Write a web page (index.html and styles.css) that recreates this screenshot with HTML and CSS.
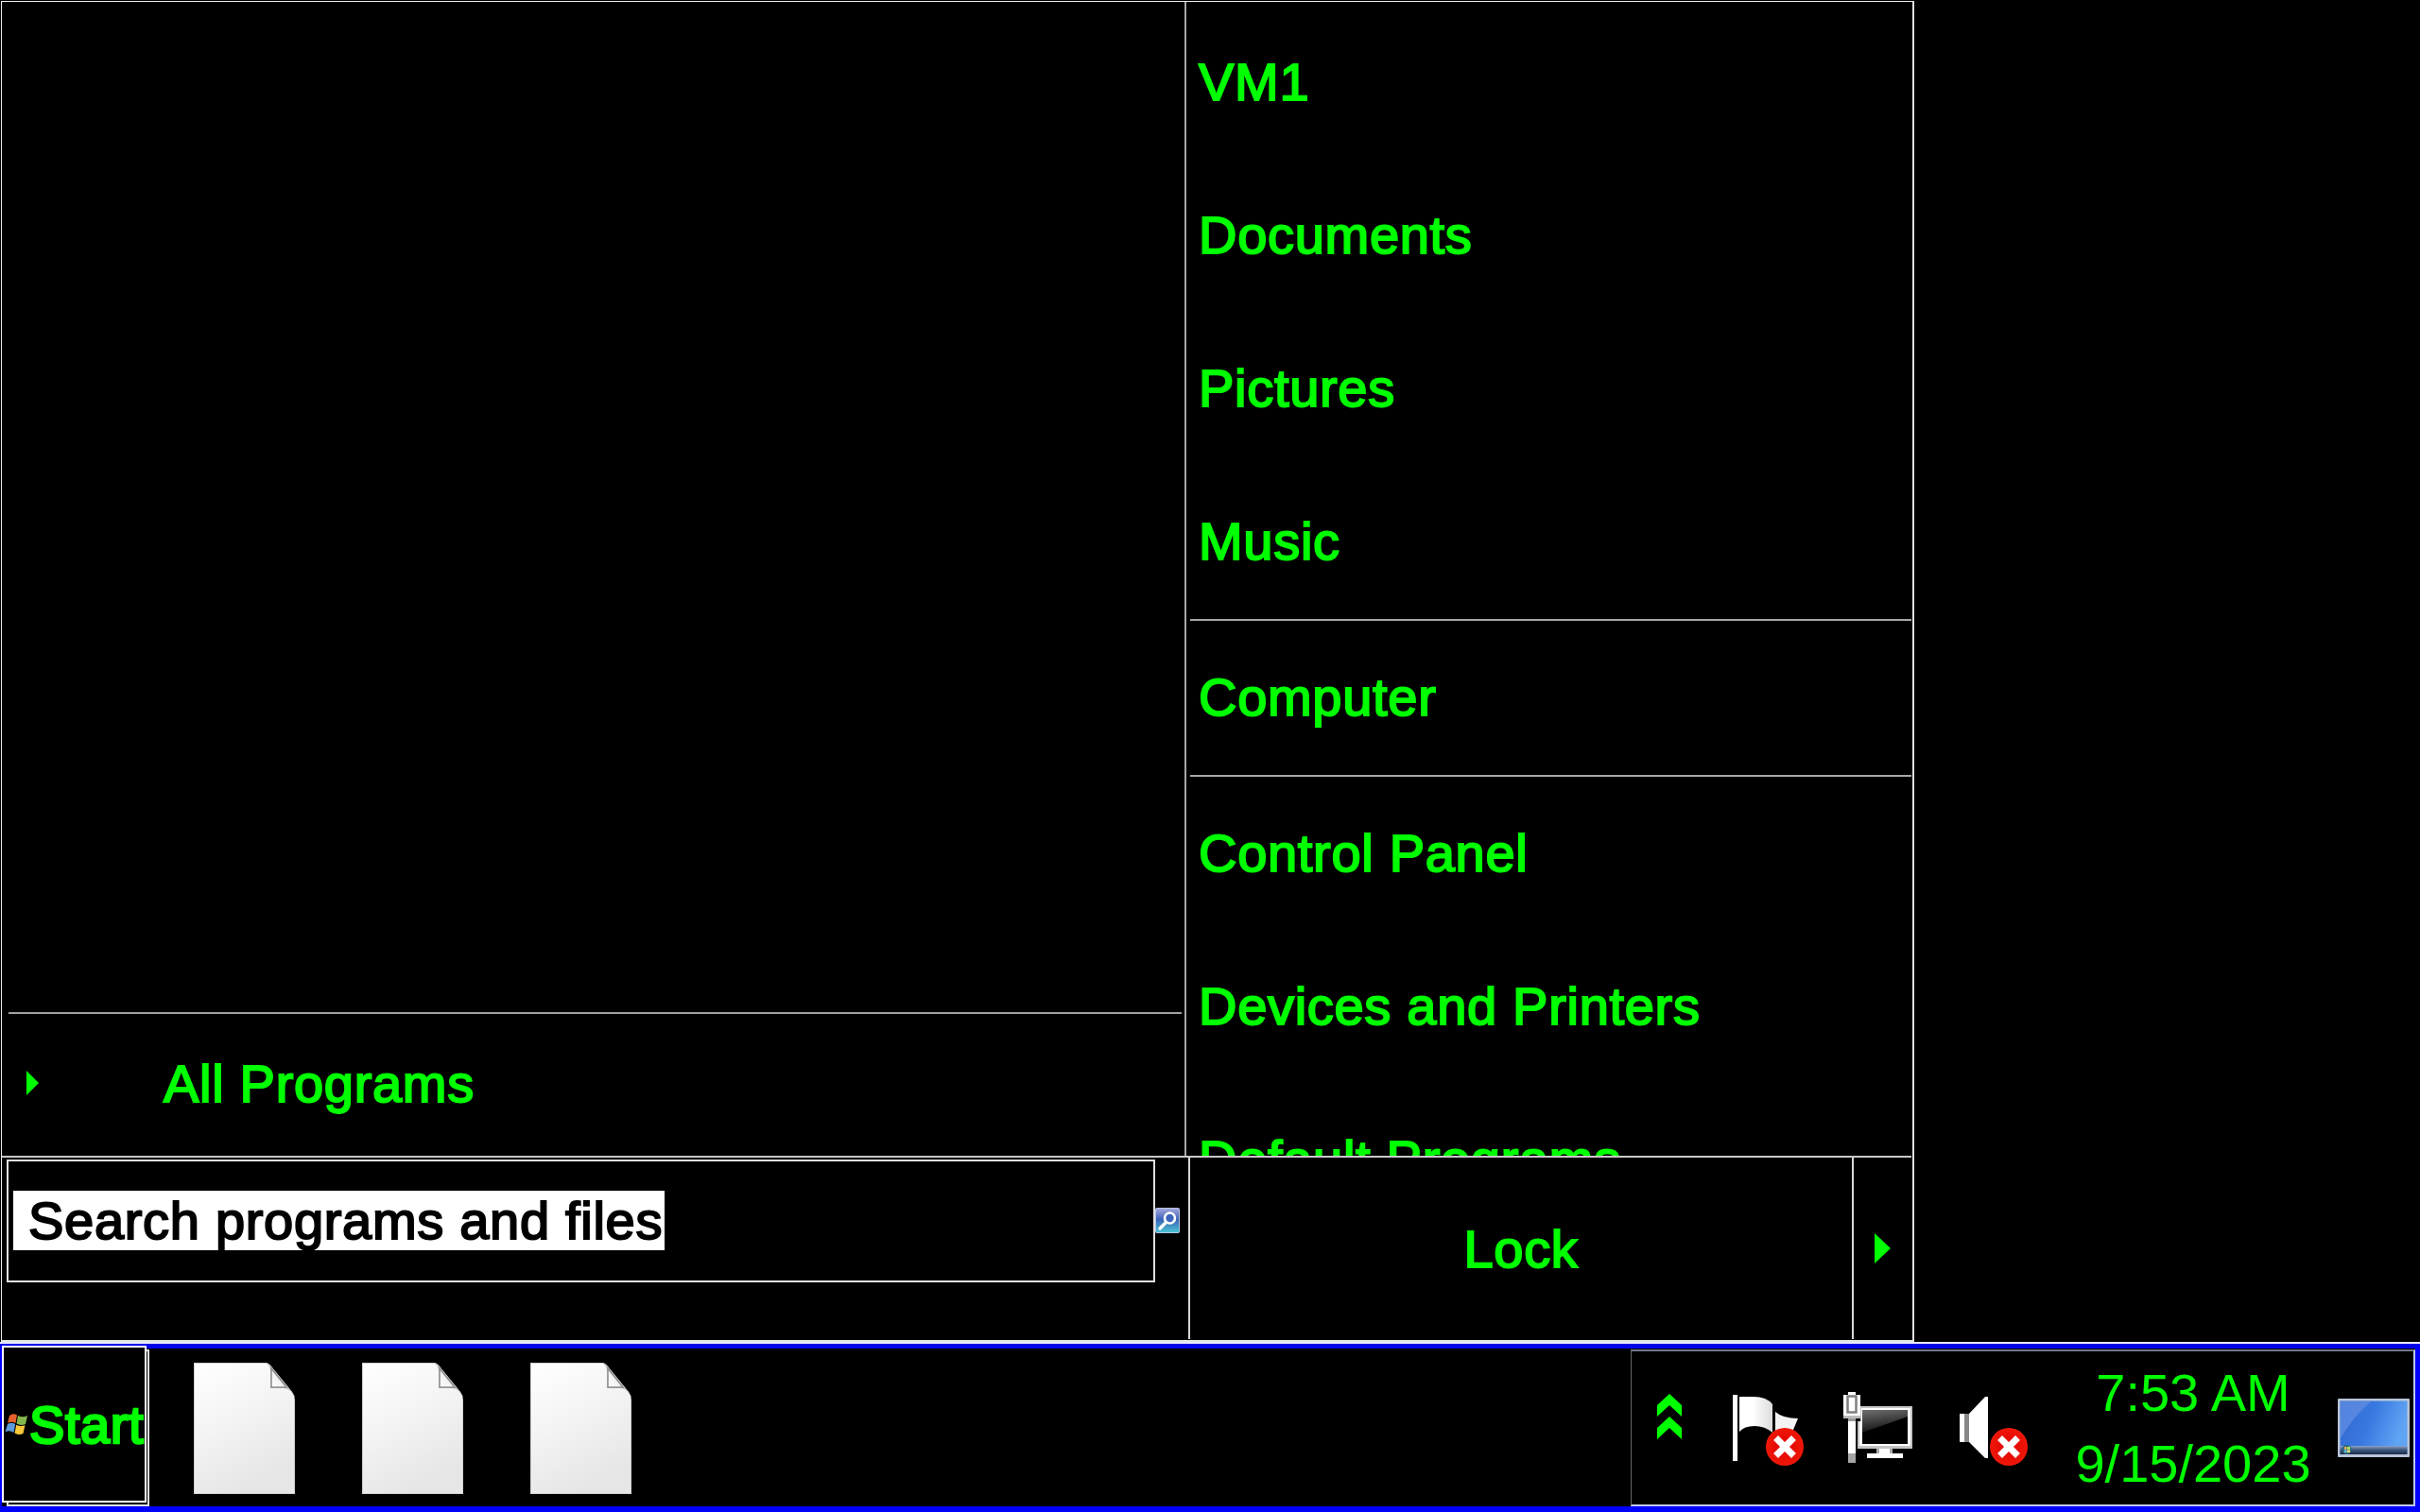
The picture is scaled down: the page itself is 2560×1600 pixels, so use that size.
FILE: index.html
```html
<!DOCTYPE html>
<html lang="en">
<head>
    <meta charset="UTF-8">
    <meta name="viewport" content="width=device-width, initial-scale=1.0">
    <title>Start Menu</title>
    <link rel="stylesheet" href="styles.css">
</head>
<body>
    <div class="desktop">
        <div class="start-menu">
            <div class="menu-top">
                <!-- Programs -->
                <div class="programs">
                    <div class="all-programs">
                        <svg class="arrow" width="13" height="26" viewBox="0 0 13 26"><path d="M0 0L13 13L0 26Z"/></svg>
                        <span>All Programs</span>
                    </div>
                </div>

                <!-- Places -->
                <div class="places">
                    <div class="place">VM1</div>
                    <div class="place">Documents</div>
                    <div class="place">Pictures</div>
                    <div class="place">Music</div>
                    <div class="separator"></div>
                    <div class="place">Computer</div>
                    <div class="separator"></div>
                    <div class="place">Control Panel</div>
                    <div class="place">Devices and Printers</div>
                    <div class="place">Default Programs</div>
                </div>
            </div>

            <div class="menu-bottom">
                <div class="search">
                    <div class="search-box"><span class="selected">Search programs and files</span></div>
                    <svg class="search-icon" width="26" height="27" viewBox="0 0 26 27">
                        <defs>
                            <linearGradient id="glass" x1="0" y1="0" x2="0" y2="1">
                                <stop offset="0" stop-color="#a9a8e0"/>
                                <stop offset="0.45" stop-color="#3a62b8"/>
                                <stop offset="1" stop-color="#4cc4d4"/>
                            </linearGradient>
                        </defs>
                        <rect x="0.5" y="0.5" width="25" height="26" rx="1" fill="url(#glass)" stroke="#b4c4e4"/>
                        <circle cx="15.5" cy="11" r="5.5" fill="#3c66bc" stroke="#fff" stroke-width="2.6"/>
                        <path d="M11.5 15.5L5 22" stroke="#fff" stroke-width="3.4" stroke-linecap="round"/>
                    </svg>
                </div>
                <div class="lock">Lock</div>
                <div class="lock-more">
                    <svg class="arrow" width="17" height="32" viewBox="0 0 17 32"><path d="M0 0L17 16L0 32Z"/></svg>
                </div>
            </div>
        </div>
    </div>

    <div class="taskbar">
        <div class="start-shadow">
            <div class="start-button">
                <svg class="logo" width="25" height="24" viewBox="0 0 25 24">
                    <path d="M5 3Q9 0 13 2.500L11.500 11Q7 8.500 3 11Z" fill="#e8602c"/>
                    <path d="M14 3Q19 5.500 24 3L22 12Q17 14 12.500 11.500Z" fill="#84b84c"/>
                    <path d="M3 12Q7 9.500 11.200 12L9.500 21Q5 18 0.500 20.500Z" fill="#5c9cdc"/>
                    <path d="M12.200 12.700Q17 15 21.500 13L19.500 22Q14 24 10.500 21.500Z" fill="#f8c838"/>
                </svg>
                <span>Start</span>
            </div>
        </div>

        <div class="pinned">
            <svg class="doc" width="107" height="139" viewBox="0 0 107 139">
                <defs>
                    <linearGradient id="paper" x1="0" y1="0" x2="0.4" y2="1">
                        <stop offset="0" stop-color="#fff"/>
                        <stop offset="0.45" stop-color="#f5f5f5"/>
                        <stop offset="1" stop-color="#e6e6e6"/>
                    </linearGradient>
                    <linearGradient id="fold" x1="0" y1="1" x2="0.6" y2="0.4">
                        <stop offset="0" stop-color="#fff"/>
                        <stop offset="1" stop-color="#ececec"/>
                    </linearGradient>
                </defs>
                <path d="M0 0H75Q79 0 82 4L104 31Q107 35 107 40V139H0Z" fill="url(#paper)"/>
                <path d="M76 0Q81 3 81 10V27H95Q104 28 107 38Q107 35 104 31L82 4Q79 0 76 0Z" fill="#c4c4c4"/>
                <path d="M82 6V26H98Z" fill="url(#fold)" stroke="#8c8c8c" stroke-width="1.500"/>
                <path d="M0.500 139V0.500H76M106.500 40V138.500H0" fill="none" stroke="#cfcfcf"/>
            </svg>
            <svg class="doc" width="107" height="139" viewBox="0 0 107 139">
                <path d="M0 0H75Q79 0 82 4L104 31Q107 35 107 40V139H0Z" fill="url(#paper)"/>
                <path d="M76 0Q81 3 81 10V27H95Q104 28 107 38Q107 35 104 31L82 4Q79 0 76 0Z" fill="#c4c4c4"/>
                <path d="M82 6V26H98Z" fill="url(#fold)" stroke="#8c8c8c" stroke-width="1.500"/>
                <path d="M0.500 139V0.500H76M106.500 40V138.500H0" fill="none" stroke="#cfcfcf"/>
            </svg>
            <svg class="doc" width="107" height="139" viewBox="0 0 107 139">
                <path d="M0 0H75Q79 0 82 4L104 31Q107 35 107 40V139H0Z" fill="url(#paper)"/>
                <path d="M76 0Q81 3 81 10V27H95Q104 28 107 38Q107 35 104 31L82 4Q79 0 76 0Z" fill="#c4c4c4"/>
                <path d="M82 6V26H98Z" fill="url(#fold)" stroke="#8c8c8c" stroke-width="1.500"/>
                <path d="M0.500 139V0.500H76M106.500 40V138.500H0" fill="none" stroke="#cfcfcf"/>
            </svg>
        </div>

        <!-- Notification area -->
        <div class="tray">
            <svg class="chevrons" width="26" height="48" viewBox="0 0 26 48">
                <path d="M13 0L26 12V24L13 12L0 24V12Z"/>
                <path d="M13 24L26 36V48L13 36L0 48V36Z"/>
            </svg>

            <svg class="flag" width="76" height="78" viewBox="0 0 76 78">
                <defs>
                    <linearGradient id="cloth" x1="0" y1="0" x2="1" y2="0">
                        <stop offset="0.4" stop-color="#fff"/>
                        <stop offset="1" stop-color="#dcdcdc"/>
                    </linearGradient>
                    <radialGradient id="red">
                        <stop offset="0.5" stop-color="#e60c04"/>
                        <stop offset="1" stop-color="#f01808"/>
                    </radialGradient>
                </defs>
                <rect x="0" y="3" width="5" height="70" fill="#fff"/>
                <path d="M7 5H22Q36 5 42 13V43Q34 36 23 36Q12 36 7 42Z" fill="url(#cloth)"/>
                <path d="M45 21Q53 28 69 28L64 40V46H45Z" fill="#f4f4f4"/>
                <circle cx="55" cy="58" r="20" fill="url(#red)"/>
                <path d="M48 51L62 65M62 51L48 65" stroke="#fff" stroke-width="7" stroke-linecap="square"/>
            </svg>

            <svg class="network" width="73" height="75" viewBox="0 0 73 75">
                <defs>
                    <linearGradient id="screen" x1="0" y1="0" x2="0.25" y2="1">
                        <stop offset="0" stop-color="#707070"/>
                        <stop offset="0.9" stop-color="#1c1c1c"/>
                    </linearGradient>
                </defs>
                <path d="M5 0H13V3H18V28H0V3H5Z" fill="#fff"/>
                <rect x="4.500" y="4.500" width="9" height="17" fill="#fff" stroke="#808080" stroke-width="2.500"/>
                <rect x="0" y="25" width="18" height="3" fill="#bbb"/>
                <rect x="5" y="28" width="8" height="37" fill="#fff"/>
                <rect x="5" y="28" width="8" height="3" fill="#999"/>
                <rect x="5" y="65" width="8" height="10" fill="#a4a4a4"/>
                <path d="M18 15H73V60H15V31H18Z" fill="#c4c4c4"/>
                <path d="M19 17H71V57H17V31H19Z" fill="#fff"/>
                <path d="M20 19H68V55H20Z" fill="#000"/>
                <path d="M20 19H68V26L20 43Z" fill="url(#screen)"/>
                <path d="M35 60H52V65H63V70H25V65H35Z" fill="#fff"/>
                <path d="M35 60H38V65H35ZM49 60H52V65H49Z" fill="#aaa"/>
            </svg>

            <svg class="volume" width="73" height="75" viewBox="0 0 73 75">
                <rect x="0" y="19" width="5" height="30" fill="#fff"/>
                <rect x="5" y="19" width="5" height="30" fill="#888"/>
                <path d="M10 19L27 1H30V66H27L10 49Z" fill="#fff"/>
                <circle cx="52" cy="54" r="20" fill="url(#red)"/>
                <path d="M45 47L59 61M59 47L45 61" stroke="#fff" stroke-width="7" stroke-linecap="square"/>
            </svg>

            <div class="clock">
                <div>7:53 AM</div>
                <div>9/15/2023</div>
            </div>

            <svg class="show-desktop" width="76" height="62" viewBox="0 0 76 62">
                <defs>
                    <linearGradient id="sky" x1="0" y1="0" x2="1" y2="0.3">
                        <stop offset="0" stop-color="#3468cc"/>
                        <stop offset="0.5" stop-color="#3878e0"/>
                        <stop offset="1" stop-color="#60a4f4"/>
                    </linearGradient>
                    <linearGradient id="bar" x1="0" y1="0" x2="0" y2="1">
                        <stop offset="0" stop-color="#8ca4cc"/>
                        <stop offset="0.5" stop-color="#3c5478"/>
                        <stop offset="1" stop-color="#182c48"/>
                    </linearGradient>
                </defs>
                <rect x="0" y="0" width="76" height="62" rx="1" fill="#b8c4d8"/>
                <rect x="2.500" y="2.500" width="71" height="56" fill="url(#sky)"/>
                <path d="M3 3H35Q14 22 3 42Z" fill="#6490e4" opacity="0.7"/>
                <rect x="2.500" y="50" width="71" height="9" fill="url(#bar)"/>
                <circle cx="9.500" cy="54" r="5" fill="#2c6c78"/>
                <path d="M7 51H9.500V54H7Z" fill="#e4a860"/>
                <path d="M10 51H13V54H10Z" fill="#a4dc6c"/>
                <path d="M7 54.500H9.500V57H7Z" fill="#6cc4e8"/>
                <path d="M10 54.500H13V57H10Z" fill="#f0e070"/>
            </svg>
        </div>
    </div>
</body>
</html>
```

FILE: styles.css
```css
* {
    box-sizing: border-box;
}

body {
    margin: 0;
    width: 2560px;
    height: 1600px;
    display: flex;
    flex-direction: column;
    background-color: #000;
    color: #0f0;
    font-family: "Liberation Sans", Arial, sans-serif;
    font-size: 56px;
    overflow: hidden;
}

svg {
    display: block;
    flex-shrink: 0;
}

.arrow,
.chevrons {
    fill: #0f0;
}

.desktop {
    height: 1422px;
    padding: 1px 0 0 1px;
    border-bottom: 2px solid #e8e8ff;
}

/* Start menu */
.start-menu {
    width: 2024px;
    height: 1419px;
    display: flex;
    flex-direction: column;
    border: 1px solid #eee;
    border-right: 2px solid #e0e0e0;
    border-bottom: 2px solid #e4e4e4;
    letter-spacing: 0.7px;
    -webkit-text-stroke: 2px currentColor;
}

.menu-top {
    height: 1221px;
    display: flex;
}

.programs {
    width: 1253px;
    padding: 0 3px 0 7px;
    display: flex;
    flex-direction: column;
    justify-content: flex-end;
    border-right: 2px solid #a8a8a8;
}

.all-programs {
    height: 152px;
    display: flex;
    align-items: center;
    gap: 132px;
    padding: 0 0 3px 19px;
    border-top: 2px solid #a0a0a0;
}

.all-programs .arrow {
    margin-bottom: 2px;
}

.places {
    flex: 1;
    padding: 5px 1px 0 4px;
    overflow: hidden;
}

.place {
    height: 162px;
    padding-left: 9px;
    line-height: 159px;
    white-space: nowrap;
}

.separator {
    height: 3px;
    border-top: 2px solid #a8a8a8;
}

.menu-bottom {
    flex: 1;
    display: flex;
    margin-right: 1px;
    border-top: 2px solid #c8c8c8;
}

.search {
    width: 1255px;
    display: flex;
    align-items: flex-start;
    padding: 2px 0 0 5px;
}

.search-box {
    width: 1215px;
    height: 130px;
    display: flex;
    align-items: flex-start;
    padding: 31px 0 0 5px;
    border: 2px solid #e0e0e0;
}

.selected {
    width: 689px;
    height: 63px;
    padding-left: 16px;
    background-color: #fff;
    color: #000;
    line-height: 63px;
    white-space: nowrap;
}

.search-icon {
    margin-top: 51px;
}

.lock {
    width: 704px;
    margin-bottom: 1px;
    display: flex;
    align-items: center;
    justify-content: center;
    border: solid #d8d8d8;
    border-width: 0 2px;
}

.lock-more {
    display: flex;
    align-items: center;
    padding: 0 0 2px 22px;
}

/* Taskbar */
.taskbar {
    height: 178px;
    display: flex;
    border: solid #00f;
    border-width: 5px 5px 6px 2px;
    border-top-color: #0000e8;
}

.start-shadow {
    width: 151px;
    height: 166px;
    margin: 1px 0 0 5px;
    border: 2px solid #e0e0e0;
}

.start-button {
    width: 153px;
    height: 166px;
    margin: -6px 0 0 -7px;
    display: flex;
    align-items: center;
    padding-left: 1px;
    border: 2px solid #fff;
    background-color: #000;
    letter-spacing: 0.6px;
    overflow: hidden;
    -webkit-text-stroke: 2.6px currentColor;
}

.logo {
    margin-right: 1px;
}

.pinned {
    flex: 1;
    display: flex;
    gap: 71px;
    padding: 15px 0 0 47px;
}

.tray {
    width: 830px;
    height: 166px;
    margin-top: 1px;
    display: flex;
    align-items: flex-start;
    border: 2px solid #c0c8e8;
    border-top-color: #707888;
    border-left: 1px solid #686868;
}

.chevrons {
    margin: 45px 0 0 27px;
}

.flag {
    margin: 43px 0 0 54px;
}

.network {
    margin: 43px 0 0 41px;
}

.volume {
    margin: 47px 0 0 50px;
}

.clock {
    width: 260px;
    margin: 6px 0 0 44px;
    line-height: 75px;
    text-align: center;
}

.show-desktop {
    margin: 50px 0 0 23px;
}
```
